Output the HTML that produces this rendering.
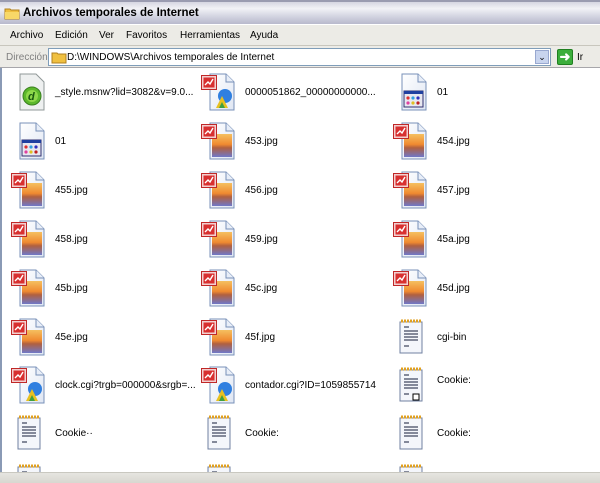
<!DOCTYPE html>
<html><head><style>
*{margin:0;padding:0;box-sizing:border-box}
body{width:600px;height:483px;overflow:hidden;background:#fff;font-family:"Liberation Sans",sans-serif;font-size:10px;color:#000;position:relative}
#title{position:absolute;left:0;top:0;width:600px;height:24px;background:linear-gradient(#d6d6e2 0,#f2f2f6 30%,#cfd0de 70%,#b8b9cc 100%);border-top:2px solid #9a9bb0}
#title span{position:absolute;left:23px;top:5px;font-weight:bold;font-size:11.5px;color:#000}
#menu{position:absolute;left:0;top:24px;width:600px;height:22px;background:#ecebe6;border-top:1px solid #fff;border-bottom:1px solid #c8c6bd}
#menu span{position:absolute;top:5px}
#addr{position:absolute;left:0;top:46px;width:600px;height:22px;background:#ecebe6;border-bottom:1px solid #a7a6aa}
#addr .lbl{position:absolute;left:6px;top:6px;color:#808080}
#addr .box{position:absolute;left:48px;top:2px;width:503px;height:18px;background:#fff;border:1px solid #7f9db9}
#addr .box span{position:absolute;left:18px;top:3px}
#content{position:absolute;left:0;top:68px;width:600px;height:404px;border-left:2px solid #8a9ab5;overflow:hidden}
.it{position:absolute;width:190px;height:44px}
.it svg{position:absolute;left:0;top:0}
.it span{position:absolute;left:45px;top:15px;white-space:nowrap}
#bot{position:absolute;left:0;top:472px;width:600px;height:11px;background:linear-gradient(#e6e5e0,#d8d7d0);border-top:1px solid #c9c8c0}
</style></head><body>
<svg width="0" height="0" style="position:absolute">
<defs>
<linearGradient id="sun" x1="0" y1="0" x2="0" y2="1"><stop offset="0" stop-color="#f5c060"/><stop offset=".45" stop-color="#f08a30"/><stop offset=".6" stop-color="#b06040"/><stop offset="1" stop-color="#6f78c8"/></linearGradient>
<linearGradient id="pg" x1="0" y1="0" x2="1" y2="1"><stop offset="0" stop-color="#fff"/><stop offset="1" stop-color="#dfe6f3"/></linearGradient>
<symbol id="page" viewBox="0 0 40 40"><path d="M10 2h16l8 8v28H10z" fill="url(#pg)" stroke="#7890b8"/><path d="M26 2v8h8" fill="#e8eef8" stroke="#7890b8"/></symbol>
<symbol id="red" viewBox="0 0 40 40"><rect x="1.5" y="3.5" width="15" height="14" fill="#f3d0d0" stroke="#c02828"/><rect x="3.5" y="5.5" width="11" height="10" fill="#d83030"/><path d="M5 13l3-3 2 2 3-5" stroke="#fff" stroke-width="1.4" fill="none"/></symbol>
<symbol id="img" viewBox="0 0 40 40"><use href="#page"/><rect x="12" y="13" width="20" height="23" fill="url(#sun)"/><use href="#red"/></symbol>
<symbol id="gif" viewBox="0 0 40 40"><use href="#page"/><circle cx="25" cy="24" r="7" fill="#2f7fe0"/><path d="M16 36l6-12 6 12z" fill="#e8c020"/><path d="M19 36l3-6 3 6z" fill="#40a040"/><use href="#red"/></symbol>
<symbol id="note" viewBox="0 0 40 40"><rect x="8" y="5" width="22" height="31" fill="#f4f6fb" stroke="#7080a0"/><path d="M9 4h20" stroke="#e0a020" stroke-width="3" stroke-dasharray="2 1"/><path d="M12 10h5M12 14h14M12 17h14M12 20h14M12 23h14M12 29h5" stroke="#404860" stroke-width="1.2"/></symbol>
<symbol id="note2" viewBox="0 0 40 40"><use href="#note"/><rect x="21" y="29" width="6" height="6" fill="#fff" stroke="#000"/></symbol>
<symbol id="win" viewBox="0 0 40 40"><use href="#page"/><rect x="12" y="19" width="19" height="16" fill="#e8e8f0" stroke="#303070"/><rect x="12" y="19" width="19" height="3" fill="#2040a0"/><circle cx="16" cy="26" r="1.6" fill="#e03030"/><circle cx="21" cy="26" r="1.6" fill="#30a0e0"/><circle cx="26" cy="26" r="1.6" fill="#3030c0"/><circle cx="16" cy="31" r="1.6" fill="#e040a0"/><circle cx="21" cy="31" r="1.6" fill="#e0c020"/><circle cx="26" cy="31" r="1.6" fill="#c02020"/></symbol>
<symbol id="dw" viewBox="0 0 40 40"><path d="M10 2h16l8 8v28H10z" fill="#eef0f0" stroke="#909898"/><circle cx="22" cy="24" r="9" fill="#5cb82c" stroke="#3a8020"/><circle cx="22" cy="24" r="6" fill="#8ed84a"/><text x="18" y="28" font-size="11" font-style="italic" font-weight="bold" fill="#1a5a10" font-family="Liberation Sans,sans-serif">d</text></symbol>
</defs></svg>

<div id="title"><svg width="16" height="14" style="position:absolute;left:4px;top:4px"><path d="M1 3h5l1 1h8v9H1z" fill="#f0c040" stroke="#b08020"/><path d="M1 6h14v7H1z" fill="#f8d868"/></svg><span>Archivos temporales de Internet</span></div>
<div id="menu"><span style="left:10px">Archivo</span><span style="left:55px">Edición</span><span style="left:99px">Ver</span><span style="left:126px">Favoritos</span><span style="left:180px">Herramientas</span><span style="left:250px">Ayuda</span></div>
<div id="addr"><span class="lbl">Dirección</span><div class="box"><svg width="16" height="14" style="position:absolute;left:2px;top:1px"><path d="M1 3h5l1 1h8v9H1z" fill="#f0c040" stroke="#b08020"/></svg><span>D:\WINDOWS\Archivos temporales de Internet</span><div style="position:absolute;right:1px;top:1px;width:14px;height:14px;background:#c8d4ee;border:1px solid #98a8d0;font-size:9px;text-align:center;line-height:12px">&#8964;</div></div>
<div style="position:absolute;left:557px;top:3px;width:16px;height:16px;background:#3cae3c;border:1px solid #208020;border-radius:2px;color:#fff;font-weight:bold;font-size:13px;line-height:14px;text-align:center">&#10140;</div><span style="position:absolute;left:577px;top:6px">Ir</span></div>

<div id="content">
<div class="it" style="left:8px;top:4px"><svg width="40" height="40"><use href="#dw"/></svg><span>_style.msnw?lid=3082&amp;v=9.0...</span></div>
<div class="it" style="left:198px;top:4px"><svg width="40" height="40"><use href="#gif"/></svg><span>0000051862_00000000000...</span></div>
<div class="it" style="left:390px;top:4px"><svg width="40" height="40"><use href="#win"/></svg><span>01</span></div>

<div class="it" style="left:8px;top:53px"><svg width="40" height="40"><use href="#win"/></svg><span>01</span></div>
<div class="it" style="left:198px;top:53px"><svg width="40" height="40"><use href="#img"/></svg><span>453.jpg</span></div>
<div class="it" style="left:390px;top:53px"><svg width="40" height="40"><use href="#img"/></svg><span>454.jpg</span></div>

<div class="it" style="left:8px;top:102px"><svg width="40" height="40"><use href="#img"/></svg><span>455.jpg</span></div>
<div class="it" style="left:198px;top:102px"><svg width="40" height="40"><use href="#img"/></svg><span>456.jpg</span></div>
<div class="it" style="left:390px;top:102px"><svg width="40" height="40"><use href="#img"/></svg><span>457.jpg</span></div>

<div class="it" style="left:8px;top:151px"><svg width="40" height="40"><use href="#img"/></svg><span>458.jpg</span></div>
<div class="it" style="left:198px;top:151px"><svg width="40" height="40"><use href="#img"/></svg><span>459.jpg</span></div>
<div class="it" style="left:390px;top:151px"><svg width="40" height="40"><use href="#img"/></svg><span>45a.jpg</span></div>

<div class="it" style="left:8px;top:200px"><svg width="40" height="40"><use href="#img"/></svg><span>45b.jpg</span></div>
<div class="it" style="left:198px;top:200px"><svg width="40" height="40"><use href="#img"/></svg><span>45c.jpg</span></div>
<div class="it" style="left:390px;top:200px"><svg width="40" height="40"><use href="#img"/></svg><span>45d.jpg</span></div>

<div class="it" style="left:8px;top:249px"><svg width="40" height="40"><use href="#img"/></svg><span>45e.jpg</span></div>
<div class="it" style="left:198px;top:249px"><svg width="40" height="40"><use href="#img"/></svg><span>45f.jpg</span></div>
<div class="it" style="left:390px;top:249px"><svg width="40" height="40"><use href="#note"/></svg><span>cgi-bin</span></div>

<div class="it" style="left:8px;top:297px"><svg width="40" height="40"><use href="#gif"/></svg><span>clock.cgi?trgb=000000&amp;srgb=...</span></div>
<div class="it" style="left:198px;top:297px"><svg width="40" height="40"><use href="#gif"/></svg><span>contador.cgi?ID=1059855714</span></div>
<div class="it" style="left:390px;top:297px"><svg width="40" height="40"><use href="#note2"/></svg><span style="top:10px">Cookie:</span></div>

<div class="it" style="left:8px;top:345px"><svg width="40" height="40"><use href="#note"/></svg><span>Cookie··</span></div>
<div class="it" style="left:198px;top:345px"><svg width="40" height="40"><use href="#note"/></svg><span>Cookie:</span></div>
<div class="it" style="left:390px;top:345px"><svg width="40" height="40"><use href="#note"/></svg><span>Cookie:</span></div>

<div class="it" style="left:8px;top:394px"><svg width="40" height="40"><use href="#note"/></svg></div>
<div class="it" style="left:198px;top:394px"><svg width="40" height="40"><use href="#note"/></svg></div>
<div class="it" style="left:390px;top:394px"><svg width="40" height="40"><use href="#note"/></svg></div>
</div>
<div id="bot"></div>
</body></html>
